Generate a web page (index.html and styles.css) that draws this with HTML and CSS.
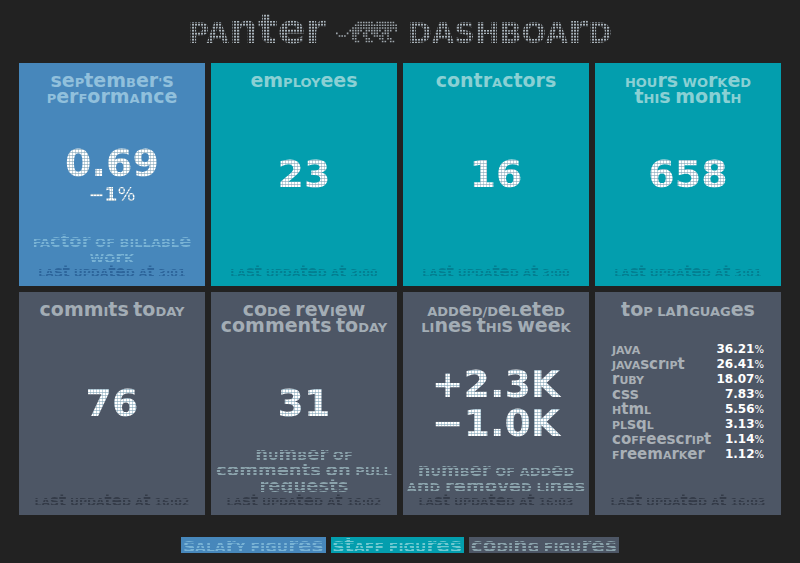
FILE: index.html
```html
<!DOCTYPE html>
<html lang="en">
<head>
<meta charset="utf-8">
<title>Panter Dashboard</title>
<link rel="stylesheet" href="styles.css">
</head>
<body>
<header>
  <h1>
    <span class="dots">PAnter</span>
    <svg class="logo" viewBox="0 0 23 8" aria-hidden="true">
      <path d="M8 .5h6M15 .5h7M7 1.5h16M6 2.5h17M5 3.5h1M6 3.5h4M11 3.5h6M18 3.5h3M22 3.5h1M0 4.5h1M4 4.5h1M6 4.5h3M10 4.5h2M13 4.5h3M17 4.5h3M1 5.5h3M6 5.5h2M10 5.5h2M14 5.5h4M19 5.5h1M6 6.5h2M11 6.5h2M16 6.5h2M19 6.5h2M7 7.5h2M11 7.5h3M17 7.5h2M20 7.5h2"/>
    </svg>
    <span class="dots">DASHBOArD</span>
  </h1>
</header>
<main class="board">
  <section class="card salary">
    <h2>sePtemBer's PerFormAnce</h2>
    <div class="value"><strong>0.69</strong><small>−1<i>%</i></small></div>
    <div class="notes"><p class="about">FActor OF BILLABLe WOrK</p><p class="updated">LAst UPDAteD At 3:01</p></div>
  </section>
  <section class="card staff">
    <h2>emPLOYees</h2>
    <div class="value"><strong>23</strong></div>
    <div class="notes"><p class="updated">LAst UPDAteD At 3:00</p></div>
  </section>
  <section class="card staff">
    <h2>contrActors</h2>
    <div class="value"><strong>16</strong></div>
    <div class="notes"><p class="updated">LAst UPDAteD At 3:00</p></div>
  </section>
  <section class="card staff">
    <h2>HOUrs WOrKeD tHIs montH</h2>
    <div class="value"><strong>658</strong></div>
    <div class="notes"><p class="updated">LAst UPDAteD At 3:01</p></div>
  </section>
  <section class="card coding">
    <h2>commIts toDAY</h2>
    <div class="value"><strong>76</strong></div>
    <div class="notes"><p class="updated">LAst UPDAteD At 16:02</p></div>
  </section>
  <section class="card coding">
    <h2>coDe revIew comments toDAY</h2>
    <div class="value"><strong>31</strong></div>
    <div class="notes"><p class="about">nUmBer OF comments on PULL requests</p><p class="updated">LAst UPDAteD At 16:02</p></div>
  </section>
  <section class="card coding">
    <h2>ADDeD/DeLeteD LInes tHIs weeK</h2>
    <div class="value"><strong>+2.3K</strong><strong>−1.0K</strong></div>
    <div class="notes"><p class="about">nUmBer OF ADDeD AnD removeD LInes</p><p class="updated">LAst UPDAteD At 16:03</p></div>
  </section>
  <section class="card coding">
    <h2>toP LAnGUAGes</h2>
    <table class="languages">
      <tbody>
        <tr><th scope="row">JAVA</th><td>36.21<i>%</i></td></tr>
        <tr><th scope="row">JAVAscrIPt</th><td>26.41<i>%</i></td></tr>
        <tr><th scope="row">rUBY</th><td>18.07<i>%</i></td></tr>
        <tr><th scope="row">css</th><td>7.83<i>%</i></td></tr>
        <tr><th scope="row">HtmL</th><td>5.56<i>%</i></td></tr>
        <tr><th scope="row">PLsqL</th><td>3.13<i>%</i></td></tr>
        <tr><th scope="row">coFFeescrIPt</th><td>1.14<i>%</i></td></tr>
        <tr><th scope="row">FreemArKer</th><td>1.12<i>%</i></td></tr>
      </tbody>
    </table>
    <div class="notes"><p class="updated">LAst UPDAteD At 16:03</p></div>
  </section>
</main>
<footer class="legend">
  <span class="salary"><b>sALArY FIGUres</b></span>
  <span class="staff"><b>stAFF FIGUres</b></span>
  <span class="coding"><b>coDInG FIGUres</b></span>
</footer>
</body>
</html>
```
FILE: styles.css
```css
* { box-sizing: border-box; margin: 0; padding: 0; }

body {
  background: #222;
  color: #fff;
  font-family: "DejaVu Sans", sans-serif;
  font-weight: bold;
  font-variant-caps: unicase;
}

h1 {
  display: flex;
  justify-content: center;
  align-items: center;
  gap: 10px;
  height: 63px;
  padding-bottom: 6px;
  font-size: 41px;
  line-height: 48px;
}

/* LED-matrix fill: a bright point in each 3px cell */
.dots {
  color: transparent;
  background:
    repeating-linear-gradient(90deg, #222 0 1px, transparent 1px 3px),
    repeating-linear-gradient(#444 0 1px, #aab4ba 1px 2px, #707880 2px 3px);
  background-clip: text;
}

.logo { width: 62px; height: 22px; margin-top: 6px; }
.logo path { fill: none; stroke: #a0a8ae; stroke-width: .6; stroke-dasharray: .6 .4; }

.board {
  display: grid;
  grid-template-columns: repeat(4, minmax(0, 1fr));
  grid-auto-rows: minmax(223px, auto);
  gap: 6px;
  padding: 0 19px;
}

.salary { background: #4787bb; --soft: #91c0dc; --line: #79b3d5; --dim: #2d659b; }
.staff { background: #039eae; --soft: #8ad0d4; --line: #70c9d1; --dim: #037f91; }
.coding { background: #4d5665; --soft: #a3adb5; --line: #8ba3ac; --dim: #343b48; }

/* heading, value and notes share one cell, pinned top, middle and bottom */
.card {
  display: grid;
  grid-template-columns: minmax(0, 1fr);
  grid-template-areas: "all";
  text-align: center;
}
.card > * { grid-area: all; }

h2 {
  align-self: start;
  padding: 9px 2px 0;
  color: var(--soft);
  font-size: 19px;
  line-height: 16px;
  text-wrap: balance;
}

.value { align-self: center; font-variant-caps: normal; }
.value strong, .value small {
  display: block;
  color: transparent;
  background:
    repeating-linear-gradient(90deg, rgb(255 255 255 / 0) 0 2px, rgb(120 160 180 / .45) 2px 3px),
    repeating-linear-gradient(#fff 0 2px, #b4c8d4 2px 3px);
  background-clip: text;
}
.value strong { font-size: 38px; line-height: 39px; }
.value small { font-size: 19px; line-height: 22px; }
.value i { font-style: normal; font-weight: normal; }

.notes { align-self: end; padding-bottom: 7px; }
.about, .legend b {
  color: transparent;
  background: repeating-linear-gradient(var(--line) 0 2px, transparent 2px 3px);
  background-clip: text;
  font-size: 18px;
  line-height: 16px;
}
.updated {
  color: transparent;
  background: repeating-linear-gradient(var(--dim) 0 2px, transparent 2px 3px);
  background-clip: text;
  font-size: 15px;
  line-height: 14px;
}

.languages {
  align-self: center;
  justify-self: stretch;
  margin: 0 17px 4px;
  border-collapse: collapse;
  font-size: 15px;
  line-height: 15px;
}
.languages th { color: #a9b0b6; text-align: left; }
.languages td { text-align: right; font-size: 12px; font-variant-caps: normal; }
.languages i { font-style: normal; font-weight: normal; font-size: 10px; }

.legend {
  display: flex;
  justify-content: center;
  gap: 5px;
  padding: 22px 0 10px;
  line-height: 16px;
}
.legend span { display: flex; padding: 0 2px; }
.legend b { font-size: 20px; }
```
